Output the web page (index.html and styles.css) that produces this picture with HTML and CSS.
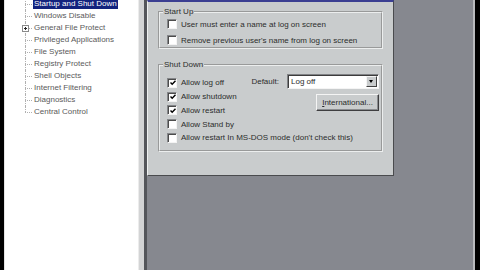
FILE: index.html
```html
<!DOCTYPE html>
<html lang="en">
<head>
  <meta charset="UTF-8" />
  <meta name="viewport" content="width=device-width, initial-scale=1" />
  <title>Startup and Shut Down</title>
  <link rel="stylesheet" href="styles.css">
</head>
<body>
  <div class="app">

    <!-- TREE -->
    <div class="tree">
      <ul class="tree-list">
        <li class="selected"><span>Startup and Shut Down</span></li>
        <li><span>Windows Disable</span></li>
        <li class="has-children">
          <svg class="expander" width="7" height="7" viewBox="0 0 7 7"><rect x="0.5" y="0.5" width="6" height="6" fill="#fff" stroke="#8a8a8a"/><path d="M2 3.5h3M3.5 2v3" stroke="#222"/></svg>
          <span>General File Protect</span>
        </li>
        <li><span>Privileged Applications</span></li>
        <li><span>File System</span></li>
        <li><span>Registry Protect</span></li>
        <li><span>Shell Objects</span></li>
        <li><span>Internet Filtering</span></li>
        <li><span>Diagnostics</span></li>
        <li><span>Central Control</span></li>
      </ul>
    </div>

    <div class="splitter"></div>

    <!-- RIGHT PANE -->
    <div class="pane">
      <div class="dialog">

        <fieldset class="group startup">
          <legend>Start Up</legend>
          <label class="check"><span class="box"></span>User must enter a name at log on screen</label>
          <label class="check"><span class="box"></span>Remove previous user's name from log on screen</label>
        </fieldset>

        <fieldset class="group shutdown">
          <legend>Shut Down</legend>
          <label class="check"><span class="box checked"><svg width="6" height="6" viewBox="0 0 6 6"><path d="M0.5 2.5L2.2 4.3L5.5 0.8" fill="none" stroke="#000" stroke-width="1.4"/></svg></span>Allow log off</label>
          <div class="options">
            <div class="default-row">
              <span>Default:</span>
              <div class="select">
                <span class="value">Log off</span>
                <span class="arrow"></span>
              </div>
            </div>
            <button class="btn"><u>I</u>nternational...</button>
          </div>
          <label class="check"><span class="box checked"><svg width="6" height="6" viewBox="0 0 6 6"><path d="M0.5 2.5L2.2 4.3L5.5 0.8" fill="none" stroke="#000" stroke-width="1.4"/></svg></span>Allow shutdown</label>
          <label class="check"><span class="box checked"><svg width="6" height="6" viewBox="0 0 6 6"><path d="M0.5 2.5L2.2 4.3L5.5 0.8" fill="none" stroke="#000" stroke-width="1.4"/></svg></span>Allow restart</label>
          <label class="check"><span class="box"></span>Allow Stand by</label>
          <label class="check wide"><span class="box"></span>Allow restart In MS-DOS mode (don't check this)</label>
        </fieldset>

      </div>
    </div>

  </div>
</body>
</html>
```

FILE: styles.css
```css
/* Reset and base */
* {
  box-sizing: border-box;
}

body {
  margin: 0;
  background: #000;
  font-family: "Liberation Sans", Arial, sans-serif;
  font-size: 8px;
  color: #2c2c2c;
  overflow: hidden;
}

.app {
  display: flex;
  width: 480px;
  height: 270px;
  padding: 0 5px 0 4px;
}

/* TREE */
.tree {
  width: 135px;
  background: #fff;
  border-left: 1px solid #e4e4e4;
  border-right: 1px solid #ececec;
  overflow: hidden;
}

.tree-list {
  list-style: none;
  margin: -2px 0 0;
  padding: 0;
}

.tree-list li {
  position: relative;
  display: flex;
  align-items: center;
  height: 12px;
  padding-left: 28px;
  color: #5a5a5a;
}

.tree-list li span {
  padding: 0 1px;
  line-height: 10px;
  white-space: nowrap;
}

/* dotted connector lines */
.tree-list li::before {
  content: "";
  position: absolute;
  left: 20px;
  top: 6px;
  width: 7px;
  border-top: 1px dotted #b0b0b0;
}

.tree-list li::after {
  content: "";
  position: absolute;
  left: 20px;
  top: 0;
  bottom: 0;
  border-left: 1px dotted #b0b0b0;
}

.tree-list li:last-child::after {
  bottom: 6px;
}

.tree-list li.selected span {
  background: #13237e;
  color: #fff;
}

.expander {
  position: absolute;
  left: 17px;
  top: 3px;
  z-index: 1;
}

.splitter {
  width: 5px;
  background: #d3d4d5;
}

/* RIGHT PANE */
.pane {
  flex: 1;
  background: #86888f;
  border-left: 3px solid #54565b;
  border-right: 2px solid #b9babd;
}

.dialog {
  width: 247px;
  height: 176px;
  background: #c9cccd;
  border-top: 2px solid #3b3f92;
  border-left: 1px solid #eef0f0;
  border-right: 1px solid #4a4b4e;
  border-bottom: 1px solid #4a4b4e;
  padding: 5px 0 0 10px;
}

.group {
  margin: 0;
  width: 225px;
  border: 2px groove #eceeee;
  padding: 0 2px 0 7px;
}

.group legend {
  margin-left: -4px;
  padding: 0 1px;
  line-height: 10px;
  color: #2c2c2c;
}

.startup .check {
  height: 14px;
  margin-bottom: 2px;
}

.startup .check:last-child {
  margin-bottom: 0;
}

.shutdown {
  margin-top: 11px;
  padding-top: 6px;
  padding-bottom: 5px;
  display: grid;
  grid-template-columns: auto 1fr;
}

.check {
  display: flex;
  align-items: center;
  gap: 4px;
  height: 14px;
  white-space: nowrap;
}

.shutdown .check {
  height: 13.75px;
}

.check.wide {
  grid-column: 1 / -1;
}

.box {
  display: flex;
  align-items: center;
  justify-content: center;
  width: 10px;
  height: 10px;
  background: #fff;
  border: 1px solid;
  border-color: #85878a #f4f4f4 #f4f4f4 #85878a;
  box-shadow: inset 1px 1px 0 #4c4c4c;
}

.box svg {
  margin: 1px 0 0 1px;
}

.options {
  grid-column: 2;
  grid-row: 1 / span 3;
  display: flex;
  flex-direction: column;
  align-items: flex-end;
  gap: 5px;
  margin-top: -2px;
}

.default-row {
  display: flex;
  align-items: center;
  gap: 8px;
}

.select {
  display: flex;
  align-items: center;
  width: 92px;
  height: 15px;
  background: #fff;
  border: 1px solid;
  border-color: #808285 #f4f4f4 #f4f4f4 #808285;
  box-shadow: inset 1px 1px 0 #3c3c3c;
  padding: 1px 1px 1px 3px;
}

.select .value {
  flex: 1;
}

.arrow {
  position: relative;
  width: 11px;
  height: 11px;
  background: #c9cccd;
  border: 1px solid;
  border-color: #f4f4f4 #404040 #404040 #f4f4f4;
}

.arrow::after {
  content: "";
  position: absolute;
  left: 2px;
  top: 3px;
  border-left: 2.5px solid transparent;
  border-right: 2.5px solid transparent;
  border-top: 3px solid #000;
}

.btn {
  width: 63px;
  height: 17px;
  padding: 0;
  font: inherit;
  color: #2c2c2c;
  background: #c9cccd;
  border: 1px solid;
  border-color: #f4f4f4 #3e3e40 #3e3e40 #f4f4f4;
  box-shadow: inset -1px -1px 0 #8a8c8f;
}
```
